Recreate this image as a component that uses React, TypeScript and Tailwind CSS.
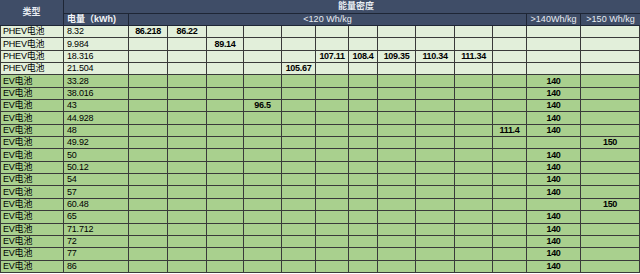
import React from 'react';

type Row = { type: string; kwh: string; vals: Record<number, string>; ev: boolean };

// column index is 3..15 (1 = type, 2 = kWh)
const rows: Row[] = [
  { type: 'PHEV电池', kwh: '8.32', vals: { 3: '86.218', 4: '86.22' }, ev: false },
  { type: 'PHEV电池', kwh: '9.984', vals: { 5: '89.14' }, ev: false },
  {
    type: 'PHEV电池',
    kwh: '18.316',
    vals: { 8: '107.11', 9: '108.4', 10: '109.35', 11: '110.34', 12: '111.34' },
    ev: false,
  },
  { type: 'PHEV电池', kwh: '21.504', vals: { 7: '105.67' }, ev: false },
  { type: 'EV电池', kwh: '33.28', vals: { 14: '140' }, ev: true },
  { type: 'EV电池', kwh: '38.016', vals: { 14: '140' }, ev: true },
  { type: 'EV电池', kwh: '43', vals: { 6: '96.5', 14: '140' }, ev: true },
  { type: 'EV电池', kwh: '44.928', vals: { 14: '140' }, ev: true },
  { type: 'EV电池', kwh: '48', vals: { 13: '111.4', 14: '140' }, ev: true },
  { type: 'EV电池', kwh: '49.92', vals: { 15: '150' }, ev: true },
  { type: 'EV电池', kwh: '50', vals: { 14: '140' }, ev: true },
  { type: 'EV电池', kwh: '50.12', vals: { 14: '140' }, ev: true },
  { type: 'EV电池', kwh: '54', vals: { 14: '140' }, ev: true },
  { type: 'EV电池', kwh: '57', vals: { 14: '140' }, ev: true },
  { type: 'EV电池', kwh: '60.48', vals: { 15: '150' }, ev: true },
  { type: 'EV电池', kwh: '65', vals: { 14: '140' }, ev: true },
  { type: 'EV电池', kwh: '71.712', vals: { 14: '140' }, ev: true },
  { type: 'EV电池', kwh: '72', vals: { 14: '140' }, ev: true },
  { type: 'EV电池', kwh: '77', vals: { 14: '140' }, ev: true },
  { type: 'EV电池', kwh: '86', vals: { 14: '140' }, ev: true },
];

const valueCols = [3, 4, 5, 6, 7, 8, 9, 10, 11, 12, 13, 14, 15];

const font = { fontFamily: '"Liberation Sans", "Noto Sans CJK SC", sans-serif' };

export default function App() {
  return (
    <div className="w-[640px] h-[274px] overflow-hidden bg-white" style={font}>
      <div className="grid grid-cols-[64px_65px_39px_39px_37px_38px_34px_33px_29px_38px_39px_38px_34px_54px_59px] grid-rows-[14px_12px_repeat(20,12.35px)] text-[9px] leading-none text-black">
        {/* header */}
        <div className="row-span-2 col-start-1 row-start-1 bg-[#3f4d67] border-r border-b border-[#1e2635] text-[#e8ecf2] font-bold flex items-center justify-center">
          类型
        </div>
        <div className="col-start-2 col-span-14 row-start-1 bg-[#3f4d67] border-b border-[#1e2635] text-[#e8ecf2] font-bold flex items-center justify-center pl-[8px]">
          能量密度
        </div>
        <div className="col-start-2 row-start-2 bg-[#3f4d67] border-r border-b border-[#1e2635] text-[#f2f4f7] font-bold flex items-center pl-[3px]">
          电量（kWh)
        </div>
        <div className="col-start-3 col-span-11 row-start-2 bg-[#3f4d67] border-r border-b border-[#1e2635] text-[#e8ecf2] flex items-center justify-center">
          &lt;120 Wh/kg
        </div>
        <div className="col-start-14 row-start-2 bg-[#3f4d67] border-r border-b border-[#1e2635] text-[#e8ecf2] flex items-center justify-center">
          &gt;140Wh/kg
        </div>
        <div className="col-start-15 row-start-2 bg-[#3f4d67] border-b border-[#1e2635] text-[#e8ecf2] flex items-center justify-center">
          &gt;150 Wh/kg
        </div>

        {/* body */}
        {rows.map((r, i) => {
          const bg = r.ev ? 'bg-[#a9d08e]' : 'bg-[#e2efda]';
          return (
            <React.Fragment key={i}>
              <div className={`${bg} border-l border-r border-b border-[#3a3a3a] flex items-center pl-[2px] tracking-[-0.2px]`}>
                {r.type}
              </div>
              <div className={`${bg} border-r border-b border-[#3a3a3a] flex items-center pl-[3px] tracking-[-0.2px]`}>
                {r.kwh}
              </div>
              {valueCols.map((c) => (
                <div
                  key={c}
                  className={`${bg} border-r border-b border-[#3a3a3a] flex items-center justify-center font-bold tracking-[-0.3px]`}
                >
                  {r.vals[c] ?? ''}
                </div>
              ))}
            </React.Fragment>
          );
        })}
      </div>
    </div>
  );
}
